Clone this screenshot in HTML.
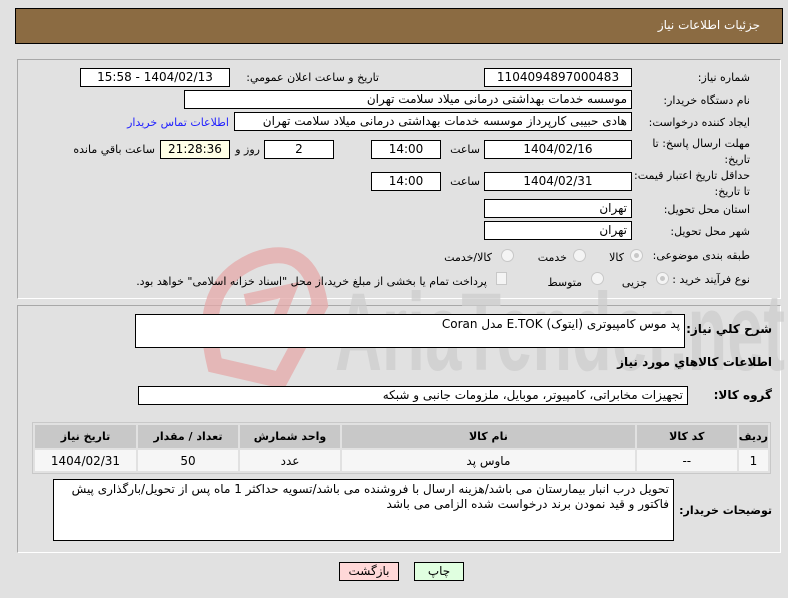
<!DOCTYPE html>
<html><head><meta charset="utf-8"><style>
*{box-sizing:border-box;margin:0;padding:0}
body{width:788px;height:598px;background:#e1e1e1;font-family:Tahoma,"DejaVu Sans","Liberation Sans",sans-serif;font-size:11px;color:#000;position:relative;overflow:hidden}
.a{position:absolute}
.box{position:absolute;background:#fff;border:1px solid #000;height:19px;line-height:17px;padding:0 4px;white-space:nowrap;overflow:hidden;direction:rtl;font-size:12px}
.c{text-align:center}
.l{position:absolute;direction:rtl;white-space:nowrap;text-align:right}
.rad{position:absolute;width:13px;height:13px;border-radius:50%;border:1px solid #c8c8c8;background:#f4f4f4}
.rad.on::after{content:"";position:absolute;left:3px;top:3px;width:5px;height:5px;border-radius:50%;background:#c8c8c8}
table{border-spacing:2px;position:absolute;left:32px;top:422px;width:739px;border:1px solid #c8c8c8;direction:rtl;font-size:11px}
th{background:#c8c8c8;height:23px;font-weight:bold}
td{background:#f6f6f6;height:21px;text-align:center;font-size:12px}
.b{font-weight:bold;font-size:12px}
</style></head><body>
<div class="a" style="left:15px;top:8px;width:768px;height:36px;background:#8b6b42;border:1px solid #000"></div>
<div class="l" style="right:28px;top:18px;color:#fff;font-size:12px">جزئیات اطلاعات نیاز</div>

<div class="a" style="left:17px;top:59px;width:764px;height:240px;border:1px solid #a8a8a8;border-right-color:#fff;border-bottom-color:#fff"></div>
<div class="a" style="left:17px;top:305px;width:764px;height:248px;border:1px solid #a8a8a8;border-right-color:#fff;border-bottom-color:#fff"></div>

<svg class="a" style="left:195px;top:245px" width="600" height="150" viewBox="0 0 600 150">
<path d="M20 120 Q0 40 60 15 Q115 -5 125 60 L85 135 Z" fill="none" stroke="#e4a8a8" stroke-width="16" opacity=".75"/>
<path d="M50 55 L95 45 L75 95" fill="none" stroke="#e4a8a8" stroke-width="12" opacity=".75"/>
<text x="140" y="125" font-family="Liberation Sans" font-size="110" font-weight="bold" fill="#cdcdcd" opacity=".7" textLength="450" lengthAdjust="spacingAndGlyphs">AriaTender.net</text>
</svg>

<div class="l" style="right:38px;top:71px">شماره نیاز:</div>
<div class="box c" style="left:484px;top:68px;width:148px">1104094897000483</div>
<div class="l" style="right:409px;top:71px">تاریخ و ساعت اعلان عمومي:</div>
<div class="box c" style="left:80px;top:68px;width:150px">1404/02/13 - 15:58</div>

<div class="l" style="right:38px;top:94px">نام دستگاه خریدار:</div>
<div class="box" style="left:184px;top:90px;width:448px">موسسه خدمات بهداشتی درمانی میلاد سلامت تهران</div>

<div class="l" style="right:38px;top:116px">ایجاد کننده درخواست:</div>
<div class="box" style="left:234px;top:112px;width:398px">هادی حبیبی کارپرداز موسسه خدمات بهداشتی درمانی میلاد سلامت تهران</div>
<div class="l" style="right:559px;top:116px;color:#2020ff">اطلاعات تماس خریدار</div>

<div class="l" style="right:38px;top:136px;line-height:16px">مهلت ارسال پاسخ: تا<br>تاریخ:</div>
<div class="box c" style="left:484px;top:140px;width:148px">1404/02/16</div>
<div class="l" style="right:308px;top:143px">ساعت</div>
<div class="box c" style="left:371px;top:140px;width:70px">14:00</div>
<div class="box c" style="left:264px;top:140px;width:70px">2</div>
<div class="l" style="right:528px;top:143px">روز و</div>
<div class="box c" style="left:160px;top:140px;width:70px;background:#ffffe6">21:28:36</div>
<div class="l" style="right:633px;top:143px">ساعت باقي مانده</div>

<div class="l" style="right:38px;top:168px;line-height:16px">حداقل تاریخ اعتبار قیمت:<br>تا تاریخ:</div>
<div class="box c" style="left:484px;top:172px;width:148px">1404/02/31</div>
<div class="l" style="right:308px;top:175px">ساعت</div>
<div class="box c" style="left:371px;top:172px;width:70px">14:00</div>

<div class="l" style="right:38px;top:203px">استان محل تحویل:</div>
<div class="box" style="left:484px;top:199px;width:148px">تهران</div>
<div class="l" style="right:38px;top:225px">شهر محل تحویل:</div>
<div class="box" style="left:484px;top:221px;width:148px">تهران</div>

<div class="l" style="right:38px;top:249px">طبقه بندی موضوعی:</div>
<div class="rad on" style="left:630px;top:249px"></div><div class="l" style="right:164px;top:251px">کالا</div>
<div class="rad" style="left:573px;top:249px"></div><div class="l" style="right:221px;top:251px">خدمت</div>
<div class="rad" style="left:501px;top:249px"></div><div class="l" style="right:296px;top:251px">کالا/خدمت</div>

<div class="l" style="right:38px;top:273px">نوع فرآیند خرید :</div>
<div class="rad on" style="left:656px;top:272px"></div><div class="l" style="right:141px;top:276px">جزیی</div>
<div class="rad" style="left:591px;top:272px"></div><div class="l" style="right:206px;top:276px">متوسط</div>
<div class="a" style="left:496px;top:272px;width:11px;height:13px;border:1px solid #c8c8c8;background:#f4f4f4"></div>
<div class="l" style="right:301px;top:275px">پرداخت تمام یا بخشی از مبلغ خرید،از محل "اسناد خزانه اسلامی" خواهد بود.</div>

<div class="l b" style="right:16px;top:322px">شرح کلي نیاز:</div>
<div class="box" style="left:135px;top:314px;width:550px;height:34px;line-height:18px">پد موس کامپیوتری (ایتوک) E.TOK مدل Coran</div>
<div class="l b" style="right:16px;top:355px">اطلاعات کالاهاي مورد نیاز</div>
<div class="l b" style="right:16px;top:388px">گروه کالا:</div>
<div class="box" style="left:138px;top:386px;width:550px">تجهیزات مخابراتی، کامپیوتر، موبایل، ملزومات جانبی و شبکه</div>

<table>
<tr><th style="width:26px">ردیف</th><th style="width:100px">کد کالا</th><th>نام کالا</th><th style="width:100px">واحد شمارش</th><th style="width:100px">تعداد / مقدار</th><th style="width:101px">تاریخ نیاز</th></tr>
<tr><td>1</td><td>--</td><td>ماوس پد</td><td>عدد</td><td>50</td><td>1404/02/31</td></tr>
</table>

<div class="l" style="right:16px;top:504px;font-weight:bold;font-size:11px">توضیحات خریدار:</div>
<div class="box" style="left:53px;top:479px;width:621px;height:62px;white-space:normal;line-height:15px;padding-top:2px">تحویل درب انبار بیمارستان می باشد/هزینه ارسال با فروشنده می باشد/تسویه حداکثر 1 ماه پس از تحویل/بارگذاری پیش فاکتور و قید نمودن برند درخواست شده الزامی می باشد</div>

<div class="a c" style="left:339px;top:562px;width:60px;height:19px;line-height:17px;border:1px solid #000;background:#ffd8d8;font-size:12px">بازگشت</div>
<div class="a c" style="left:414px;top:562px;width:50px;height:19px;line-height:17px;border:1px solid #000;background:#e0ffe0;font-size:12px">چاپ</div>
</body></html>
